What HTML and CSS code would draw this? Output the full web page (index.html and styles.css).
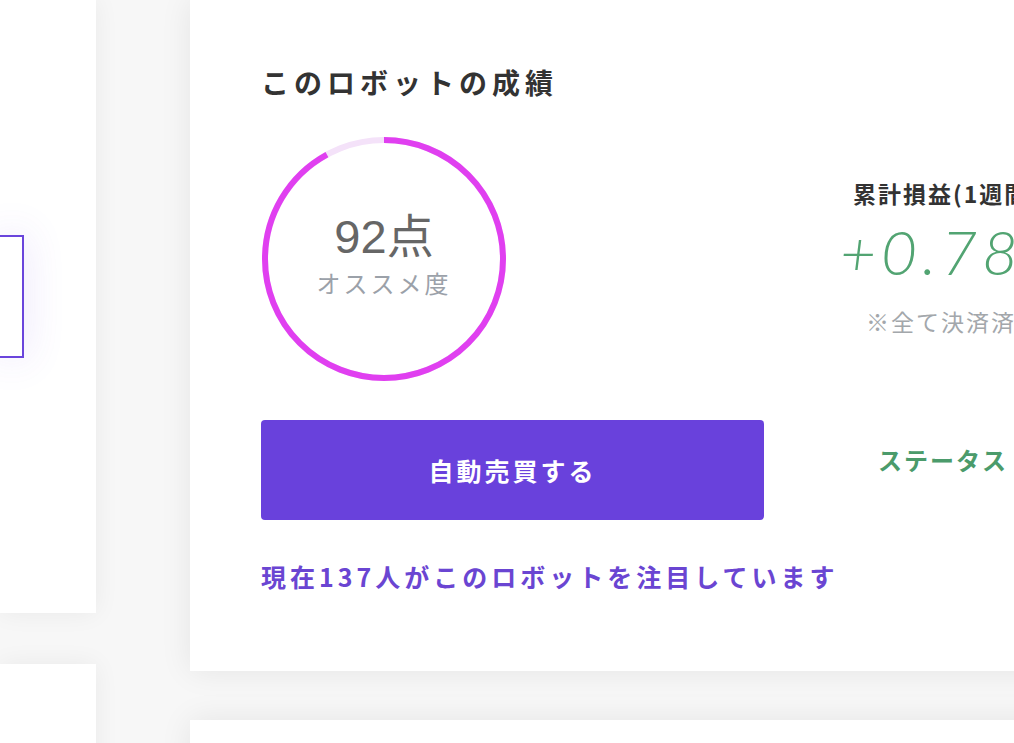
FILE: index.html
```html
<!DOCTYPE html>
<html>
  <head>
    <title>ロボットの成績</title>
    <link rel="stylesheet" href="styles.css">
  </head>
  <body>
    <div class="page">
      <div class="side">
        <div class="side-card">
          <div class="choice"></div>
        </div>
        <div class="side-card next"></div>
      </div>

      <div class="main">
        <div class="card">
          <h2 class="title">このロボットの成績</h2>

          <div class="stats">
            <div class="score">
              <svg class="ring" width="244" height="244" viewBox="0 0 244 244">
                <circle cx="122" cy="122" r="119" fill="none" stroke="#f4e2f9" stroke-width="6"/>
                <!-- 92% of the ring: circumference 747.7 -->
                <circle cx="122" cy="122" r="119" fill="none" stroke="#e03ff0" stroke-width="6"
                        stroke-dasharray="687.9 747.7" transform="rotate(-90 122 122)"/>
              </svg>
              <div class="score-text">
                <div class="points">92点</div>
                <div class="label">オススメ度</div>
              </div>
            </div>

            <div class="profit">
              <div class="profit-title">累計損益(1週間)</div>
              <div class="profit-value">+0.78%</div>
              <div class="profit-note">※全て決済済みの取引</div>
            </div>
          </div>

          <div class="actions">
            <button class="buy" type="button">自動売買する</button>
            <div class="status">ステータス：稼働中</div>
          </div>

          <p class="watchers">現在137人がこのロボットを注目しています</p>
        </div>

        <div class="card next"></div>
      </div>
    </div>
  </body>
</html>
```

FILE: styles.css
```css
body {
  margin: 0;
  background-color: #f7f7f7;
  font-family: "Noto Sans CJK JP", "Liberation Sans", sans-serif;
  overflow: hidden;
}

.page {
  display: flex;
  gap: 94px;
  width: 1300px;
}

.side {
  width: 96px;
  flex-shrink: 0;
  display: flex;
  flex-direction: column;
  gap: 51px;
}

.side-card {
  height: 613px;
  background-color: #ffffff;
  box-shadow: 0px 0px 24px rgba(0, 0, 0, 0.06);
  padding-top: 235px;
  box-sizing: border-box;
}

.side-card.next {
  height: 200px;
  padding-top: 0;
}

.choice {
  width: 22px;
  height: 119px;
  border: 2px solid #6a45dc;
  border-left: none;
  box-shadow: 0px 0px 40px rgba(110, 70, 230, 0.16);
}

.main {
  flex: 1;
  display: flex;
  flex-direction: column;
  gap: 49px;
}

.card {
  height: 671px;
  box-sizing: border-box;
  background-color: #ffffff;
  box-shadow: 0px 0px 30px rgba(0, 0, 0, 0.08);
  padding: 60px 0 0 71px;
}

.card.next {
  height: 200px;
}

.title {
  margin: 0;
  font-size: 28px;
  line-height: 44px;
  font-weight: 700;
  color: #333333;
  letter-spacing: 5px;
}

.stats {
  display: flex;
  margin-top: 33px;
}

.score {
  width: 244px;
  height: 244px;
  margin-left: 1px;
  display: grid;
  place-items: center;
}

.ring,
.score-text {
  grid-area: 1 / 1;
}

.score-text {
  text-align: center;
  margin-top: -8px;
}

.points {
  font-family: "Liberation Sans", "Noto Sans CJK JP", sans-serif;
  font-size: 47px;
  line-height: 54px;
  color: #666666;
  font-weight: 400;
}

.label {
  font-size: 24px;
  line-height: 34px;
  color: #9ba1a9;
  letter-spacing: 3px;
  margin-top: 2px;
}

.profit {
  margin-left: 334px;
  white-space: nowrap;
}

.profit-title {
  margin: 38px 0 0 13px;
  font-size: 23px;
  line-height: 36px;
  font-weight: 700;
  color: #333333;
  letter-spacing: 2px;
}

.profit-value {
  margin-top: 8px;
  font-family: Lato, "Liberation Sans", sans-serif;
  font-style: italic;
  font-weight: 300;
  font-size: 62px;
  line-height: 64px;
  color: #52a472;
  letter-spacing: 5px;
}

.profit-note {
  margin: 21px 0 0 26px;
  font-size: 23px;
  line-height: 34px;
  color: #a3a7ab;
  letter-spacing: 2px;
}

.actions {
  display: flex;
  align-items: center;
  margin-top: 39px;
}

.buy {
  width: 503px;
  height: 100px;
  border: none;
  border-radius: 4px;
  background-color: #6941dc;
  color: #ffffff;
  font-family: "Noto Sans CJK JP", "Liberation Sans", sans-serif;
  font-size: 25px;
  font-weight: 700;
  letter-spacing: 3px;
}

.status {
  margin: -22px 0 0 114px;
  font-size: 24px;
  font-weight: 700;
  color: #4b9b6b;
  letter-spacing: 2px;
  white-space: nowrap;
}

.watchers {
  margin: 38px 0 0 0;
  font-size: 25px;
  line-height: 36px;
  font-weight: 700;
  color: #6a45d2;
  letter-spacing: 4px;
}
```
